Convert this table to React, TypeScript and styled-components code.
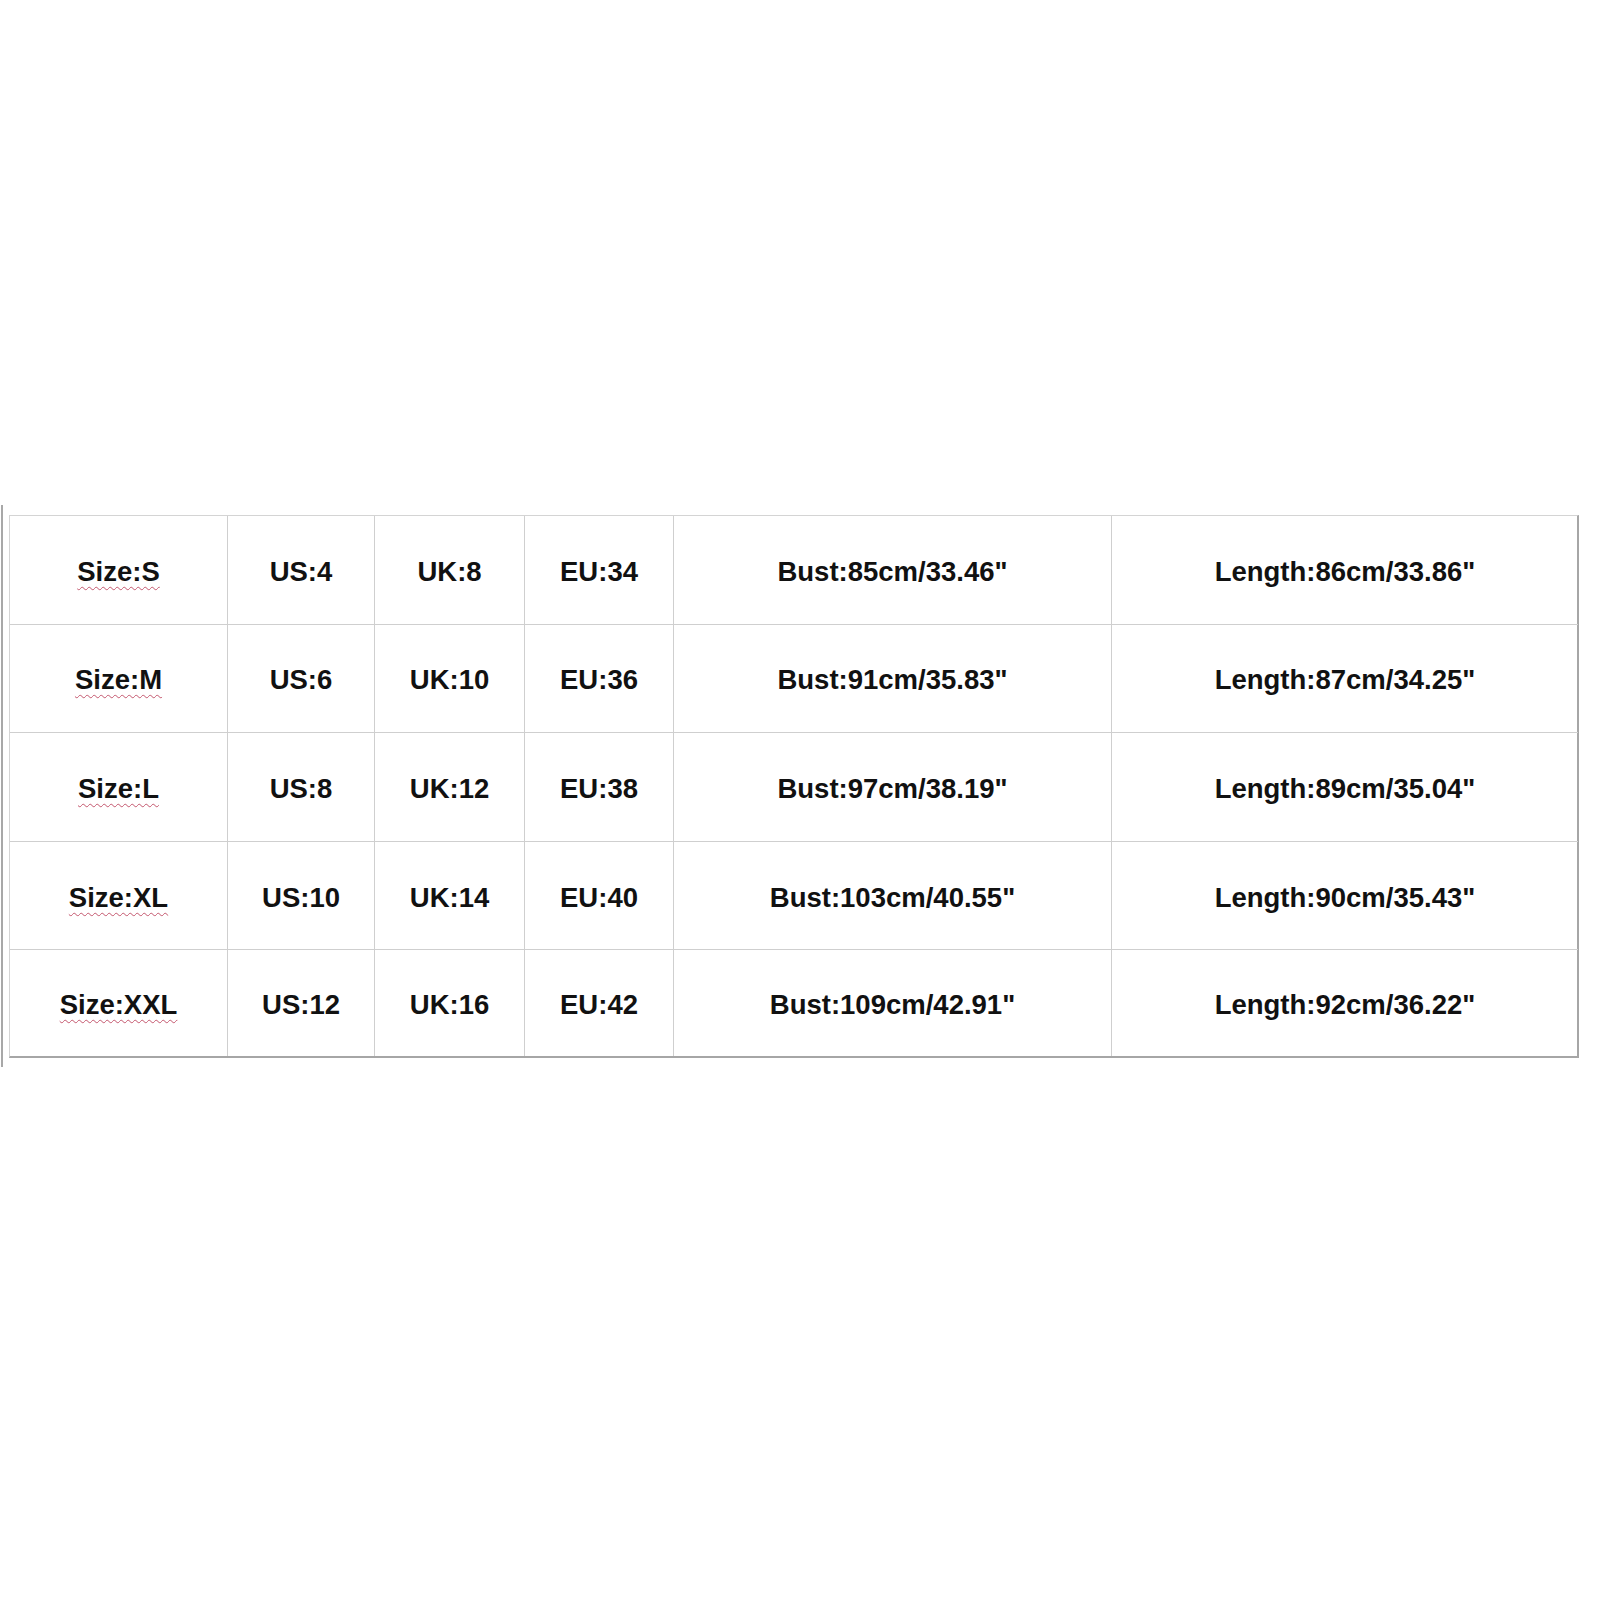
import styled, { createGlobalStyle } from 'styled-components';

const GlobalStyle = createGlobalStyle`
  html, body {
    margin: 0;
    padding: 0;
    background: #fff;
  }
`

const Page = styled.div`
  width: 1600px;
  height: 1600px;
  padding-top: 505px;
  box-sizing: border-box;
  display: flex;
  flex-direction: row;
  align-items: flex-start;
  background: #fff;
`

const SideRule = styled.div`
  width: 2px;
  height: 562px;
  margin-left: 1px;
  background: #a8a8a8;
`

const Table = styled.div`
  margin-left: 6px;
  margin-top: 10px;
  display: grid;
  grid-template-columns: 218px 147px 150px 149px 438px 466px;
  grid-template-rows: 108.6px 108.6px 108.6px 108.6px 106px;
  border-top: 1px solid #d4d4d4;
  border-left: 1px solid #d4d4d4;
  border-right: 2px solid #a6a6a6;
  border-bottom: 2px solid #a6a6a6;
  box-sizing: border-box;
  width: 1570px;
`

const Cell = styled.div<{ last?: boolean; bottom?: boolean }>`
  display: flex;
  align-items: center;
  justify-content: center;
  border-right: ${p => (p.last ? 'none' : '1px solid #cfcfcf')};
  border-bottom: ${p => (p.bottom ? 'none' : '1px solid #cfcfcf')};
  font-family: "Liberation Sans", Arial, sans-serif;
  font-weight: bold;
  font-size: 27.5px;
  color: #111;
  padding-top: ${p => (p.bottom ? '3px' : '4px')};
  box-sizing: border-box;
`

const SizeLabel = styled.span`
  text-decoration: underline wavy #c4566e;
  text-decoration-thickness: 1px;
  text-underline-offset: 5px;
`

const rows = [
  ['Size:S', 'US:4', 'UK:8', 'EU:34', 'Bust:85cm/33.46"', 'Length:86cm/33.86"'],
  ['Size:M', 'US:6', 'UK:10', 'EU:36', 'Bust:91cm/35.83"', 'Length:87cm/34.25"'],
  ['Size:L', 'US:8', 'UK:12', 'EU:38', 'Bust:97cm/38.19"', 'Length:89cm/35.04"'],
  ['Size:XL', 'US:10', 'UK:14', 'EU:40', 'Bust:103cm/40.55"', 'Length:90cm/35.43"'],
  ['Size:XXL', 'US:12', 'UK:16', 'EU:42', 'Bust:109cm/42.91"', 'Length:92cm/36.22"'],
]

export default function App() {
  return (
    <>
      <GlobalStyle />
      <Page>
        <SideRule />
        <Table>
          {rows.map((row, r) =>
            row.map((text, c) => (
              <Cell key={`${r}-${c}`} last={c === row.length - 1} bottom={r === rows.length - 1}>
                {c === 0 ? <SizeLabel>{text}</SizeLabel> : text}
              </Cell>
            ))
          )}
        </Table>
      </Page>
    </>
  );
}
